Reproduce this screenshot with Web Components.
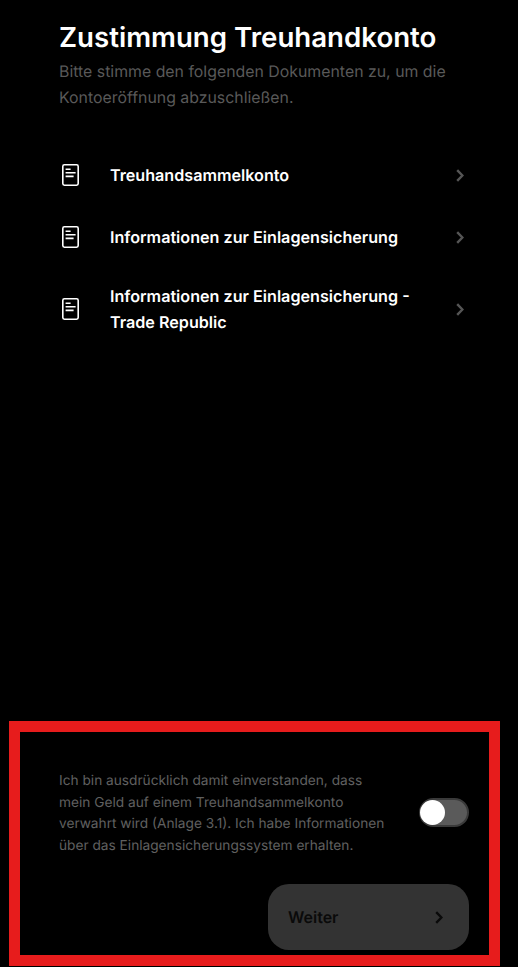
<!DOCTYPE html>
<html lang="de">
<head>
<meta charset="utf-8">
<title>Zustimmung Treuhandkonto</title>
<style>
  html, body { margin: 0; background: #000; }
  body { font-family: Inter, "Liberation Sans", sans-serif; text-rendering: geometricPrecision; }
</style>
</head>
<body>
<template id="consent-screen-template">
  <style>
    :host { display: flex; flex-direction: column; height: 967px; box-sizing: border-box; background: #000; overflow: hidden; }
    header { padding: 19px 40px 0 59px; }
    h1 { margin: 0; font-size: 27.65px; line-height: 36px; font-weight: 600; color: #fff; white-space: nowrap; }
    p { margin: 4px 0 0; font-size: 15.87px; line-height: 26px; color: #595959; }
    .docs { display: flex; flex-direction: column; margin-top: 33px; }
    .foot { margin-top: auto; }
  </style>
  <header>
    <h1><slot name="title"></slot></h1>
    <p><slot name="subtitle"></slot></p>
  </header>
  <div class="docs"><slot name="docs"></slot></div>
  <div class="foot"><slot name="foot"></slot></div>
</template>

<template id="doc-row-template">
  <style>
    :host { display: flex; align-items: center; min-height: 62px; box-sizing: border-box; padding: 15px 54px 15px 62px; cursor: pointer; }
    svg { flex: none; display: block; }
    .label { flex: 1; margin-left: 31px; font-size: 16.15px; line-height: 26px; font-weight: 600; color: #fff; }
    .chev { margin-left: 8px; }
  </style>
  <svg width="17" height="22" viewBox="0 0 17 22" fill="none" stroke="#fff" stroke-width="1.6">
    <rect x=".8" y=".8" width="15.4" height="20.4" rx="1.6"/>
    <path d="M3.6 5.2h5M3.6 8.8h10M3.6 12.4h8"/>
  </svg>
  <div class="label"><slot></slot></div>
  <svg class="chev" width="8" height="13" viewBox="0 0 8 13" fill="none" stroke="#555" stroke-width="2.4">
    <path d="M1.2 1.2 6.4 6.5 1.2 11.8"/>
  </svg>
</template>

<template id="toggle-switch-template">
  <style>
    :host { display: block; flex: none; width: 50px; height: 29px; box-sizing: border-box; border-radius: 15px; background: #5a5a5a; border: 2px solid #3a3a3a; position: relative; cursor: pointer; }
    .knob { position: absolute; left: -1px; top: 0; width: 25px; height: 25px; border-radius: 50%; background: #fff; }
  </style>
  <div class="knob"></div>
</template>

<template id="next-button-template">
  <style>
    :host { display: flex; align-items: center; justify-content: space-between; width: 201px; height: 66px; box-sizing: border-box; padding: 0 26px 0 20px; border-radius: 21px; background: #333; color: #0a0a0a; font-size: 16px; font-weight: 600; cursor: pointer; }
    svg { display: block; }
  </style>
  <span><slot></slot></span>
  <svg width="8" height="13" viewBox="0 0 8 13" fill="none" stroke="#0a0a0a" stroke-width="2.4">
    <path d="M1.2 1.2 6.4 6.5 1.2 11.8"/>
  </svg>
</template>

<template id="consent-panel-template">
  <style>
    :host { display: block; box-sizing: border-box; width: 491px; height: 245px; margin: 0 0 1px 9px; border: 11px solid #e71c1c; background: #000; }
    .terms { display: flex; align-items: center; justify-content: space-between; padding: 36px 20px 0 39px; }
    .text { width: 330px; padding-top: 3px; font-size: 13.7px; line-height: 21.6px; color: #606060; }
    .actions { display: flex; justify-content: flex-end; padding: 27px 20px 0 0; }
  </style>
  <div class="terms">
    <div class="text"><slot></slot></div>
    <toggle-switch></toggle-switch>
  </div>
  <div class="actions"><slot name="action"></slot></div>
</template>

<consent-screen>
  <span slot="title">Zustimmung Treuhandkonto</span>
  <span slot="subtitle">Bitte stimme den folgenden Dokumenten zu, um die Kontoeröffnung abzuschließen.</span>
  <doc-row slot="docs">Treuhandsammelkonto</doc-row>
  <doc-row slot="docs">Informationen zur Einlagensicherung</doc-row>
  <doc-row slot="docs">Informationen zur Einlagensicherung - Trade Republic</doc-row>
  <consent-panel slot="foot">
    Ich bin ausdrücklich damit einverstanden, dass mein Geld auf einem Treuhandsammelkonto verwahrt wird (Anlage 3.1). Ich habe Informationen über das Einlagensicherungssystem erhalten.
    <next-button slot="action">Weiter</next-button>
  </consent-panel>
</consent-screen>

<script>
  function define (name) {
    customElements.define(name, class extends HTMLElement {
      constructor () {
        super()
        let shadow = this.attachShadow({ mode: 'open' })
        let template = document.querySelector('#' + name + '-template')
        shadow.appendChild(template.content.cloneNode(true))
      }
    })
  }
  ['toggle-switch', 'next-button', 'doc-row', 'consent-panel', 'consent-screen'].forEach(define)
</script>
</body>
</html>
